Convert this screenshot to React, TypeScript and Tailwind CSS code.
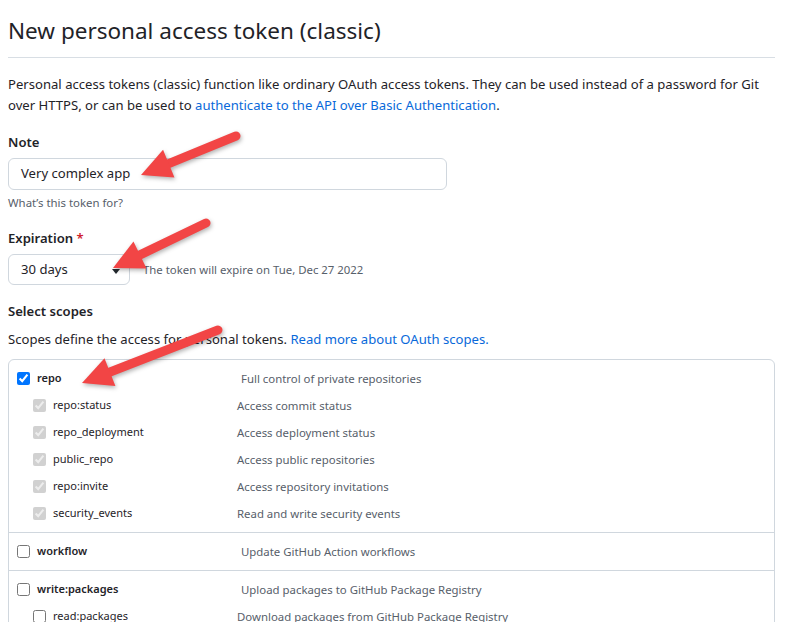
import React from 'react';

type Scope = { name: string; desc: string; sub?: { name: string; desc: string; checked: boolean }[]; checked: boolean };

const groups: Scope[] = [
  {
    name: 'repo',
    desc: 'Full control of private repositories',
    checked: true,
    sub: [
      { name: 'repo:status', desc: 'Access commit status', checked: true },
      { name: 'repo_deployment', desc: 'Access deployment status', checked: true },
      { name: 'public_repo', desc: 'Access public repositories', checked: true },
      { name: 'repo:invite', desc: 'Access repository invitations', checked: true },
      { name: 'security_events', desc: 'Read and write security events', checked: true },
    ],
  },
  { name: 'workflow', desc: 'Update GitHub Action workflows', checked: false },
  {
    name: 'write:packages',
    desc: 'Upload packages to GitHub Package Registry',
    checked: false,
    sub: [{ name: 'read:packages', desc: 'Download packages from GitHub Package Registry', checked: false }],
  },
];

// red callout arrow, tail -> tip
const Arrow = ({ x1, y1, x2, y2 }: { x1: number; y1: number; x2: number; y2: number }) => {
  const len = Math.hypot(x2 - x1, y2 - y1);
  const ux = (x2 - x1) / len;
  const uy = (y2 - y1) / len;
  const nx = -uy;
  const ny = ux;
  const H = 30;
  const W = 15;
  const bx = x2 - ux * H;
  const by = y2 - uy * H;
  const head = `${x2},${y2} ${bx + nx * W},${by + ny * W} ${bx - nx * W},${by - ny * W}`;
  return (
    <g>
      <line x1={x1} y1={y1} x2={bx + ux * 4} y2={by + uy * 4} stroke="#f24545" strokeWidth={9} strokeLinecap="round" />
      <polygon points={head} fill="#f24545" />
    </g>
  );
};

const Check = ({ checked, disabled }: { checked: boolean; disabled?: boolean }) => (
  <input type="checkbox" checked={checked} disabled={disabled} readOnly className="w-[13px] h-[13px] m-0 shrink-0" />
);

export default function App() {
  return (
    <div
      className="relative w-[798px] h-[622px] overflow-hidden bg-white text-[#1f2328] pl-2 pr-[23px]"
      style={{ fontFamily: '"Segoe UI", "Noto Sans", sans-serif' }}
    >
      {/* Header */}
      <div className="pt-[16px] pb-[11px] border-b border-[#d8dee4]">
        <h1 className="text-[22.5px] leading-[30px] font-normal">New personal access token (classic)</h1>
      </div>

      <p className="mt-4 text-[13.1px] leading-[21px]">
        <span className="whitespace-nowrap">
          Personal access tokens (classic) function like ordinary OAuth access tokens. They can be used instead of a password for Git
        </span>
        <br />
        over HTTPS, or can be used to <span className="text-[#0969da]">authenticate to the API over Basic Authentication</span>.
      </p>

      {/* Note */}
      <div className="mt-4 text-[13.1px] leading-[21px] font-semibold">Note</div>
      <div className="mt-[5px] w-[439px] h-8 border border-[#d0d7de] rounded-md flex items-center px-3 text-[13.1px]">
        Very complex app
      </div>
      <div className="mt-1 text-[11.4px] leading-[18px] text-[#57606a]">What’s this token for?</div>

      {/* Expiration */}
      <div className="mt-4 text-[13.1px] leading-[21px] font-semibold">
        Expiration <span className="text-[#cf222e]">*</span>
      </div>
      <div className="mt-[5px] flex items-center">
        <div className="w-[122px] h-[31px] border border-[#d0d7de] rounded-md flex items-center justify-between pl-3 pr-[9px] text-[13.1px]">
          <span>30 days</span>
          <svg width="8" height="5" viewBox="0 0 8 5" className="mt-[3px]">
            <path d="M0 0h8L4 5z" fill="#24292f" />
          </svg>
        </div>
        <span className="ml-[13px] text-[11.4px] text-[#57606a]">The token will expire on Tue, Dec 27 2022</span>
      </div>

      {/* Scopes */}
      <div className="mt-4 text-[13.1px] leading-[21px] font-semibold">Select scopes</div>
      <p className="mt-[7px] text-[13.1px] leading-[21px]">
        Scopes define the access for personal tokens. <span className="text-[#0969da]">Read more about OAuth scopes.</span>
      </p>

      <div className="mt-[9px] border border-[#d0d7de] rounded-md">
        {groups.map((g, i) => (
          <div key={g.name} className={`py-[5px] ${i > 0 ? 'border-t border-[#d0d7de]' : ''}`}>
            <div className="h-[27px] flex items-center pl-2">
              <div className="w-[224px] flex items-center gap-[7px]">
                <Check checked={g.checked} />
                <span className="font-semibold text-[11px]">{g.name}</span>
              </div>
              <span className="text-[#57606a] text-[11.4px]">{g.desc}</span>
            </div>
            {g.sub?.map((s) => (
              <div key={s.name} className="h-[27px] flex items-center pl-6">
                <div className="w-[204px] flex items-center gap-[7px]">
                  <Check checked={s.checked} disabled={g.checked} />
                  <span className="text-[11px]">{s.name}</span>
                </div>
                <span className="text-[#57606a] text-[11.4px]">{s.desc}</span>
              </div>
            ))}
          </div>
        ))}
      </div>

      {/* Callout arrows */}
      <svg
        className="absolute inset-0 pointer-events-none"
        width="798"
        height="622"
        style={{ filter: 'drop-shadow(1px 2px 2px rgba(0,0,0,0.3))' }}
      >
        <Arrow x1={236} y1={136} x2={141} y2={175} />
        <Arrow x1={206} y1={223} x2={113} y2={268} />
        <Arrow x1={218} y1={330} x2={82} y2={383} />
      </svg>
    </div>
  );
}
